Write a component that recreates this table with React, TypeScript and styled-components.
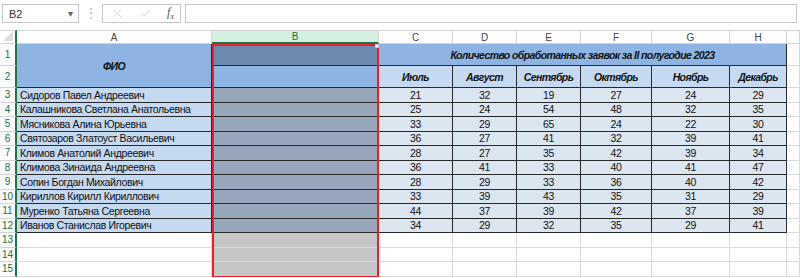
import styled, { createGlobalStyle } from "styled-components";
import { X, Check } from "lucide-react";

const GlobalStyle = createGlobalStyle`
  body {
    margin: 0;
    background: #ffffff;
    font-family: "Liberation Sans", Arial, sans-serif;
  }
`;

const months = ["Июль", "Август", "Сентябрь", "Октябрь", "Ноябрь", "Декабрь"];

const rows: [string, number[]][] = [
  ["Сидоров Павел Андреевич", [21, 32, 19, 27, 24, 29]],
  ["Калашникова Светлана Анатольевна", [25, 24, 54, 48, 32, 35]],
  ["Мясникова Алина Юрьевна", [33, 29, 65, 24, 22, 30]],
  ["Святозаров Златоуст Васильевич", [36, 27, 41, 32, 39, 41]],
  ["Климов Анатолий Андреевич", [28, 27, 35, 42, 39, 34]],
  ["Климова Зинаида Андреевна", [36, 41, 33, 40, 41, 47]],
  ["Сопин Богдан Михайлович", [28, 29, 33, 36, 40, 42]],
  ["Кириллов Кирилл Кириллович", [33, 39, 43, 35, 31, 29]],
  ["Муренко Татьяна Сергеевна", [44, 37, 39, 42, 37, 39]],
  ["Иванов Станислав Игоревич", [34, 29, 32, 35, 29, 41]],
];

const columns = ["A", "B", "C", "D", "E", "F", "G", "H", ""];

export default function App() {
  return (
    <>
      <GlobalStyle />
      <Toolbar>
        <NameBox>
          <span>B2</span>
          <Caret>▾</Caret>
        </NameBox>
        <Dots>⋮</Dots>
        <FuncBox>
          <X size={13} strokeWidth={1.2} color="#b8b8b8" />
          <Check size={13} strokeWidth={1.2} color="#b8b8b8" />
          <Fx>
            f<sub>x</sub>
          </Fx>
        </FuncBox>
        <FormulaBar />
      </Toolbar>

      <Sheet>
        <Corner>
          <svg width="10" height="10" viewBox="0 0 10 10">
            <polygon points="10,0 10,10 0,10" fill="#dcdcdc" />
          </svg>
        </Corner>
        {columns.map((c) => (
          <ColHeader key={c || "I"} $selected={c === "B"}>
            {c}
          </ColHeader>
        ))}

        <RowHeader $row={2}>1</RowHeader>
        <RowHeader $row={3}>2</RowHeader>
        <HeadCell $bg="#8db4e2" style={{ gridRow: "2 / 4", gridColumn: 2 }}>
          ФИО
        </HeadCell>
        <Cell $bg="#6d8bb0" $line="dark" />
        <HeadCell $bg="#8db4e2" style={{ gridColumn: "4 / 10" }}>
          Количество обработанных заявок за II полугодие 2023
        </HeadCell>
        <Cell />
        <Cell $bg="#8db4e2" $line="dark" />
        {months.map((m) => (
          <HeadCell key={m} $bg="#c5d9f1">
            {m}
          </HeadCell>
        ))}
        <Cell />

        {rows.map(([name, nums], i) => (
          <Row key={name} num={i + 3} name={name} nums={nums} />
        ))}

        {[13, 14, 15].map((n) => (
          <EmptyRow key={n} num={n} />
        ))}

        <Selection />
      </Sheet>
    </>
  );
}

const Row = ({ num, name, nums }: { num: number; name: string; nums: number[] }) => (
  <>
    <RowHeader $row={num + 1}>{num}</RowHeader>
    <Cell $bg="#c5d9f1" $line="dark" $align="left">
      {name}
    </Cell>
    <Cell $bg="#97a6ba" $line="dark" />
    {nums.map((v, k) => (
      <Cell key={k} $bg="#dce6f1" $line="dark">
        {v}
      </Cell>
    ))}
    <Cell />
  </>
);

const EmptyRow = ({ num }: { num: number }) => (
  <>
    <RowHeader $row={num + 1}>{num}</RowHeader>
    <Cell />
    <Cell $bg="#c6c6c6" />
    {Array.from({ length: 7 }, (_, k) => (
      <Cell key={k} />
    ))}
  </>
);

const Toolbar = styled.div`
  height: 30px;
  display: flex;
  align-items: flex-start;
  padding: 4px 3px 0 2px;
  box-sizing: border-box;
  font-size: 11px;
  color: #333;
`;

const NameBox = styled.div`
  width: 77px;
  height: 19px;
  box-sizing: border-box;
  border: 1px solid #c6c6c6;
  display: flex;
  align-items: center;
  justify-content: space-between;
  padding: 0 5px 0 6px;
`;

const Caret = styled.span`
  font-size: 10px;
  color: #666;
`;

const Dots = styled.div`
  width: 23px;
  height: 19px;
  line-height: 19px;
  text-align: center;
  color: #b0b0b0;
  font-size: 12px;
`;

const FuncBox = styled.div`
  width: 79px;
  height: 19px;
  box-sizing: border-box;
  border: 1px solid #c6c6c6;
  display: flex;
  align-items: center;
  justify-content: space-between;
  padding: 0 6px 0 8px;
`;

const Fx = styled.span`
  font-family: "Liberation Serif", "Times New Roman", serif;
  font-style: italic;
  font-size: 12px;
  color: #555;

  sub {
    font-size: 8px;
  }
`;

const FormulaBar = styled.div`
  flex: 1;
  height: 19px;
  margin-left: 4px;
  box-sizing: border-box;
  border: 1px solid #c6c6c6;
`;

const Sheet = styled.div`
  position: relative;
  display: grid;
  grid-template-columns: 17px 195px 167px 74px 64px 64px 71px 78px 57px 1fr;
  grid-template-rows: 14px 22px 22px repeat(13, 14.5px);
  font-size: 10.5px;
  letter-spacing: -0.35px;
  color: #111;
`;

const Corner = styled.div`
  box-sizing: border-box;
  display: flex;
  align-items: flex-end;
  justify-content: flex-end;
  padding: 0 2px 2px 0;
  border-right: 2px solid #217346;
  border-bottom: 1px solid #d4d4d4;
  border-top: 1px solid #d4d4d4;
`;

const ColHeader = styled.div<{ $selected?: boolean }>`
  box-sizing: border-box;
  display: flex;
  align-items: center;
  justify-content: center;
  font-size: 10px;
  letter-spacing: 0;
  color: ${({ $selected }) => ($selected ? "#217346" : "#444")};
  background: ${({ $selected }) => ($selected ? "#d3f0e0" : "#ffffff")};
  border-top: 1px solid #d4d4d4;
  border-right: 1px solid #d4d4d4;
  border-bottom: ${({ $selected }) => ($selected ? "2px solid #217346" : "1px solid #d4d4d4")};
`;

const RowHeader = styled.div<{ $row: number }>`
  grid-column: 1;
  grid-row: ${({ $row }) => $row};
  box-sizing: border-box;
  display: flex;
  align-items: center;
  justify-content: center;
  font-size: 10px;
  letter-spacing: 0;
  color: #217346;
  background: #fbfbfb;
  border-right: 2px solid #217346;
  border-bottom: 1px solid #d4d4d4;
`;

const Cell = styled.div<{ $bg?: string; $line?: "dark" | "grid"; $align?: "left" | "center" }>`
  box-sizing: border-box;
  display: flex;
  align-items: center;
  justify-content: ${({ $align }) => ($align === "left" ? "flex-start" : "center")};
  padding: 0 3px;
  white-space: nowrap;
  overflow: hidden;
  background: ${({ $bg }) => $bg || "#ffffff"};
  border-right: 1px solid ${({ $line }) => ($line === "dark" ? "#2a2a2a" : "#dadada")};
  border-bottom: 1px solid ${({ $line }) => ($line === "dark" ? "#2a2a2a" : "#dadada")};
`;

const HeadCell = styled(Cell).attrs({ $line: "dark" as const })`
  font-weight: bold;
  font-style: italic;
  letter-spacing: -0.6px;
`;

const Selection = styled.div`
  position: absolute;
  left: 212px;
  top: 14px;
  width: 167px;
  height: 234px;
  box-sizing: border-box;
  border: 2px solid #e8202a;
  pointer-events: none;

  &::after {
    content: "";
    position: absolute;
    right: -2px;
    top: -2px;
    width: 2px;
    height: 2px;
    background: #ffffff;
    border: 1px solid #c8c8c8;
  }
`;
